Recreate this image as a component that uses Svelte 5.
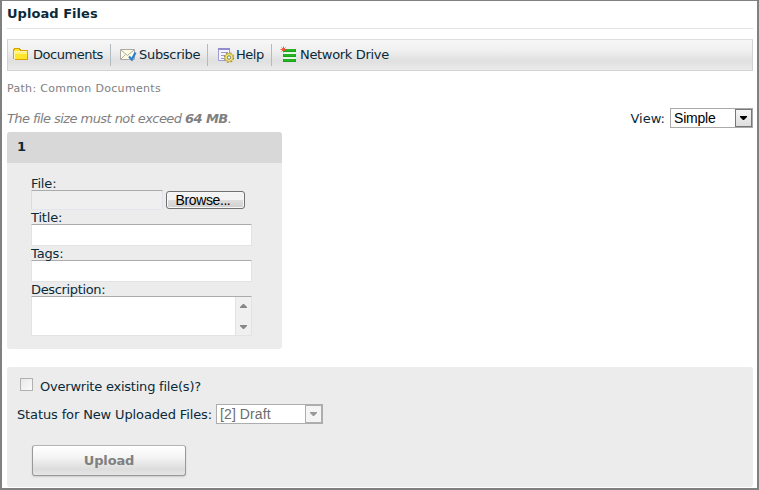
<script>
  const fields = [{ label: 'Title:' }, { label: 'Tags:' }];
</script>

<main class="window">
  <h1><span class="t-title">Upload Files</span></h1>

  <nav class="toolbar">
    <div class="item docs">
      <svg width="16" height="16" viewBox="0 0 16 16" shape-rendering="crispEdges">
        <path d="M1 3h1V2h5v1h1v1h7v9H1z" fill="#ffe62a" />
        <path d="M2 5h12v3H2z" fill="#fff37c" />
        <path d="M.5 13V3.500h1v-1h5v1h1v1h7v9H1.500" fill="none" stroke="#d9a200" />
        <path d="M1.500 5.500h12M1.500 5v8" stroke="#fff8a8" fill="none" />
      </svg>
      <span class="t-docs">Documents</span>
    </div>
    <div class="item sub">
      <svg width="17" height="16" viewBox="0 0 17 16">
        <path d="M.5 2.500h14v10H.5z" fill="#fffbe0" stroke="#a9a9a9" />
        <path d="m1 3 6.500 5.500L14 3M1 12l4.500-4.500" fill="none" stroke="#aaa" />
        <path d="m9 9.500 2.800 3 3.700-7" fill="none" stroke="#2a7fd0" stroke-width="2.200" />
      </svg>
      <span class="t-sub">Subscribe</span>
    </div>
    <div class="item help">
      <svg width="17" height="17" viewBox="0 0 17 17">
        <path d="M.5 1.500h11V13.500H.5z" fill="#f5f5ff" stroke="#9d9ad6" />
        <path d="M0 2h12" stroke="#918ecf" stroke-width="2" />
        <path d="M3 5.500h7M3 8.500h7M3 11.500h7" stroke="#9d9ad6" />
        <circle cx="11" cy="10.500" r="4.600" fill="#f4e878" stroke="#9c8b37" stroke-width="1.200" stroke-dasharray="2 1.610" />
        <circle cx="11" cy="10.500" r="4" fill="#f4e878" stroke="#b9a544" stroke-width=".7" />
        <circle cx="11" cy="10.500" r="1.700" fill="#fff" stroke="#777" />
      </svg>
      <span class="t-help">Help</span>
    </div>
    <div class="item net">
      <svg width="17" height="17" viewBox="0 0 17 17">
        <path d="M3 3h13v13H3z" fill="#e9f5e4" />
        <path d="M5 3h11v3H3V5zM3 8h13v3H3zM3 13h13v3H3z" fill="#19a51b" />
        <path d="M6 4h9M4 9h11M4 14h11" stroke="#35c52b" />
        <path d="M3.500.500v6M.5 3.500h6M1.500 1.500l4 4M5.500 1.500l-4 4" stroke="#f4492c" stroke-width=".9" />
      </svg>
      <span class="t-net">Network Drive</span>
    </div>
  </nav>

  <div class="path">Path: Common Documents</div>

  <div class="notice">
    <em>The file size must not exceed <b>64 MB</b>.</em>
    <div class="view">
      <span>View:</span>
      <div class="select simple">
        <span>Simple</span>
        <i><svg width="7" height="4" viewBox="0 0 7 4"><path d="M0 0h7v1L4 4H3L0 1z" fill="#000" /></svg></i>
      </div>
    </div>
  </div>

  <section class="card">
    <header>1</header>
    <div class="body">
      <div class="lbl">File:</div>
      <div class="file">
        <div class="box name"></div>
        <button class="browse">Browse...</button>
      </div>
      {#each fields as f}
        <div class="lbl">{f.label}</div>
        <div class="box"></div>
      {/each}
      <div class="lbl t-desc">Description:</div>
      <div class="box area">
        <div class="scroll">
          <svg width="7" height="4" viewBox="0 0 7 4"><path d="M3 0h1l3 3v1H0V3z" fill="#888" /></svg>
          <svg width="7" height="4" viewBox="0 0 7 4"><path d="M0 0h7v1L4 4H3L0 1z" fill="#888" /></svg>
        </div>
      </div>
    </div>
  </section>

  <section class="panel">
    <div class="check"><i></i><span class="t-over">Overwrite existing file(s)?</span></div>
    <div class="status">
      <span class="t-stat">Status for New Uploaded Files:</span>
      <div class="select draft">
        <span>[2] Draft</span>
        <i><svg width="7" height="4" viewBox="0 0 7 4"><path d="M0 0h7v1L4 4H3L0 1z" fill="#999" /></svg></i>
      </div>
    </div>
    <button class="upload">Upload</button>
  </section>
</main>

<style>
  .window {
    box-sizing: border-box;
    width: 759px;
    height: 490px;
    border: 2px solid #808080;
    border-top-width: 1px;
    padding: 0 4px 0 5px;
    background: #fff;
    color: #0a2939;
    font: 13px/20px Verdana, "DejaVu Sans", sans-serif;
    white-space: nowrap;
    overflow: hidden;
  }
  h1 {
    margin: 0;
    height: 27px;
    font-size: 13px;
    line-height: 25px;
    border-bottom: 1px solid #e3e3e3;
  }
  .toolbar {
    box-sizing: border-box;
    display: flex;
    margin-top: 10px;
    height: 32px;
    border: 1px solid #d2d2d2;
    border-top-color: #dedede;
    background: linear-gradient(#f7f7f7, #f0f0f0 35%, #e0e0e0 70%, #ebebeb);
    padding-top: 4px;
  }
  .item {
    box-sizing: border-box;
    display: flex;
    height: 22px;
    line-height: 22px;
    border-right: 1px solid #b2bac2;
  }
  .item svg { flex: none; margin-top: 3px; }
  .docs { width: 103px; padding-left: 5px; gap: 4px; }
  .docs svg { margin-top: 2px; }
  .sub { width: 97px; padding-left: 9px; gap: 2px; }
  .help { width: 64px; padding-left: 10px; gap: 1px; }
  .net { padding-left: 8px; gap: 3px; border: 0; }
  .net svg { margin-top: 2px; }
  .t-title { letter-spacing: 0.04px; }
  .t-docs { letter-spacing: -0.47px; }
  .t-sub { letter-spacing: -0.3px; }
  .t-help { letter-spacing: -0.45px; }
  .t-net { letter-spacing: -0.32px; }
  .t-desc { letter-spacing: -0.35px; }
  .t-over { letter-spacing: -0.22px; }
  .path {
    height: 20px;
    margin-top: 8px;
    font-size: 11px;
    letter-spacing: 0.31px;
    color: #808080;
  }
  .notice {
    display: flex;
    justify-content: space-between;
    height: 20px;
    margin-top: 9px;
    color: #808080;
  }
  .notice em { line-height: 21px; letter-spacing: -0.57px; }
  .view { display: flex; gap: 5px; color: #0a2939; line-height: 21px; }
  .select {
    box-sizing: border-box;
    display: flex;
    justify-content: space-between;
    height: 20px;
    border: 1px solid #aaa;
    background: #fff;
    padding-left: 3px;
    color: #000;
    font: 14px/19px "Liberation Sans", Arial, sans-serif;
  }
  .select i {
    box-sizing: border-box;
    display: flex;
    align-items: center;
    justify-content: center;
    width: 17px;
    height: 18px;
    border: 1px solid #777;
    background: linear-gradient(#f5f5f5, #ddd);
  }
  .simple { width: 83px; }
  .simple span { letter-spacing: -0.2px; }
  .card {
    width: 275px;
    height: 217px;
    margin-top: 4px;
    border-radius: 3px;
    overflow: hidden;
    background: #ececec;
  }
  .card header {
    height: 31px;
    padding-left: 10px;
    background: #d8d8d8;
    font-weight: bold;
    line-height: 30px;
  }
  .body { padding: 13px 30px 0 24px; }
  .lbl { height: 14px; line-height: 15px; letter-spacing: -0.15px; }
  .lbl.t-desc { letter-spacing: -0.35px; }
  .file { display: flex; align-items: center; gap: 3px; height: 20px; }
  .box {
    box-sizing: border-box;
    width: 221px;
    height: 22px;
    border: 1px solid #e3e3e6;
    border-top-color: #ababab;
    border-radius: 1px;
    background: #fff;
  }
  .box.name { width: 132px; height: 20px; background: #efefef; border-color: #ababab #e0e2ea #e3e6ee #dcdcdc; }
  .browse {
    box-sizing: border-box;
    width: 79px;
    height: 18px;
    padding: 0 5px 0 0;
    border: 1px solid #707070;
    border-radius: 3px;
    background: linear-gradient(#f3f3f3 48%, #dedede 52%, #cfcfcf);
    box-shadow: inset 0 0 0 1px #f6f6f6;
    color: #000;
    font: 14px/17px "Liberation Sans", Arial, sans-serif;
    letter-spacing: -0.4px;
  }
  .box.area { display: flex; justify-content: flex-end; height: 40px; }
  .scroll {
    box-sizing: border-box;
    display: flex;
    flex-direction: column;
    justify-content: space-between;
    align-items: center;
    width: 16px;
    padding: 7px 0 6px;
    background: #f0f0f0;
    border-left: 1px solid #e2e2e2;
  }
  .panel {
    box-sizing: border-box;
    height: 120px;
    margin-top: 18px;
    border-radius: 3px;
    background: #ececec;
    padding: 10px 10px 0;
  }
  .check { display: flex; gap: 7px; height: 20px; padding-left: 3px; }
  .check i {
    box-sizing: border-box;
    width: 13px;
    height: 13px;
    margin-top: 1px;
    border: 1px solid #b1b1b1;
    background: linear-gradient(135deg, #e8e8e8, #fafafa);
  }
  .status { display: flex; margin-top: 7px; height: 20px; line-height: 21px; }
  .t-stat { width: 199px; letter-spacing: -0.13px; }
  .draft { width: 107px; color: #6d6d6d; border-color: #adadad; }
  .draft span { letter-spacing: 0.1px; }
  .draft i { border-color: #adadad; background: #f4f4f4; }
  .upload {
    box-sizing: border-box;
    display: block;
    width: 154px;
    height: 31px;
    margin: 21px 0 0 15px;
    padding: 0;
    border: 1px solid #999;
    border-top-color: #b5b5b5;
    border-radius: 3px;
    background: linear-gradient(#fff, #f4f4f4 40%, #dcdcdc 80%, #e6e6e6);
    box-shadow: 0 1px 2px #ccc;
    color: #808080;
    font: bold 13px/29px Verdana, "DejaVu Sans", sans-serif;
    letter-spacing: -0.15px;
  }
</style>
